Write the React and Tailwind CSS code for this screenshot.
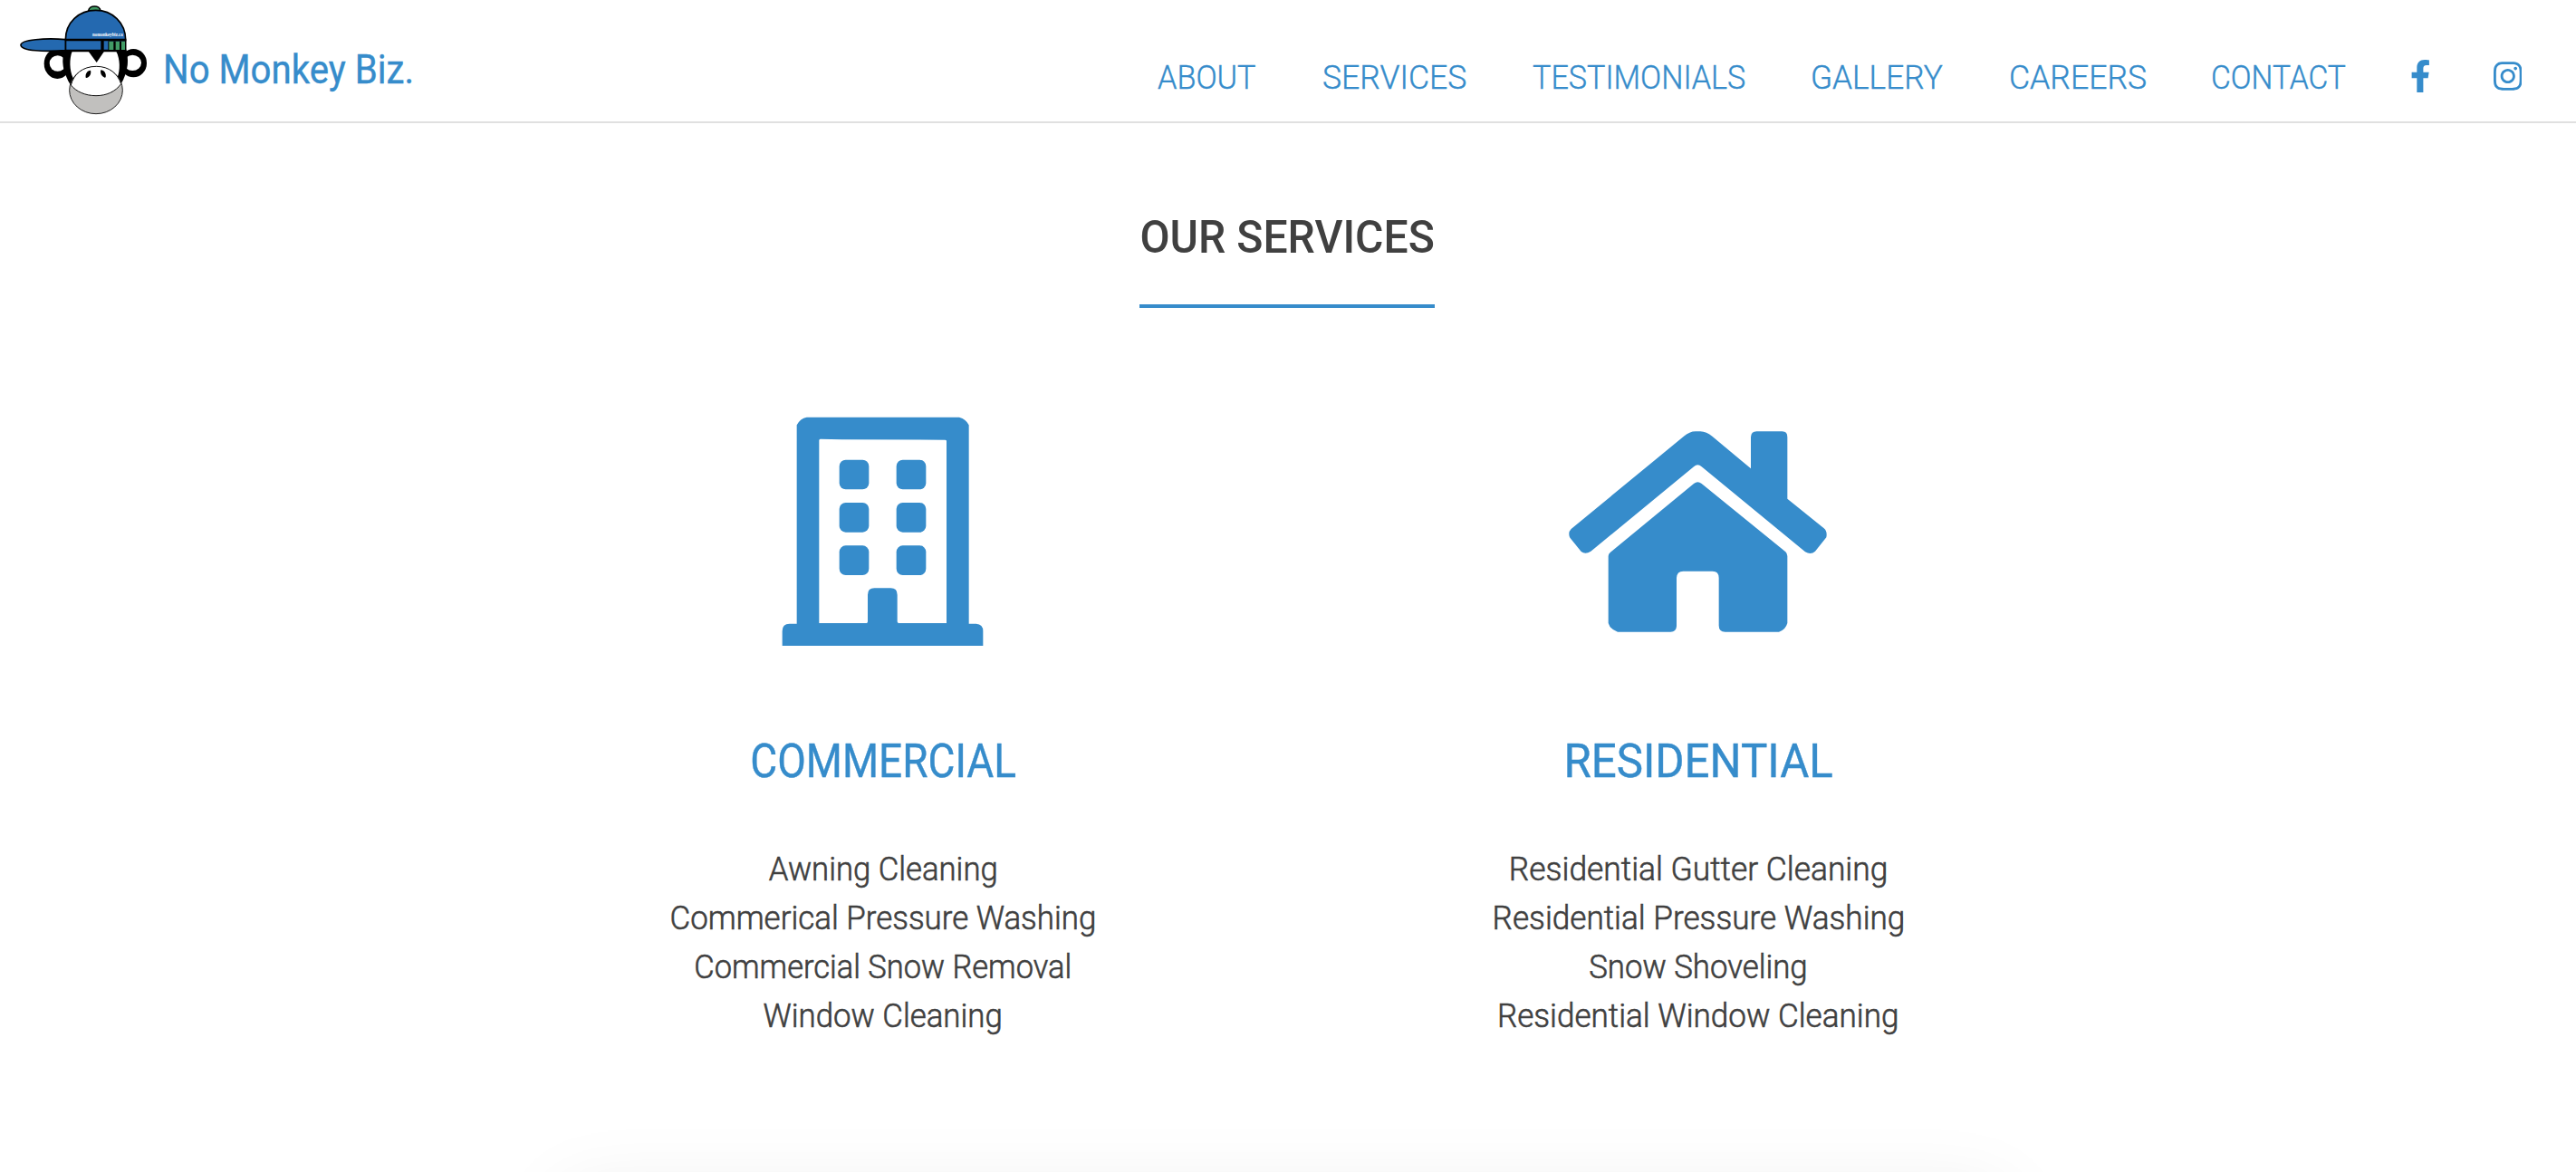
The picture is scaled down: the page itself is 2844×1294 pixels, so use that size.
import React from 'react';
import { FaFacebookF, FaInstagram } from 'react-icons/fa';

const navItems = [
  { label: 'ABOUT', box: 'w-[110px]', fit: 'scale-x-[0.951]' },
  { label: 'SERVICES', box: 'w-[160px]', fit: 'scale-x-[0.987]' },
  { label: 'TESTIMONIALS', box: 'w-[235px]', fit: 'scale-x-[0.948]' },
  { label: 'GALLERY', box: 'w-[147px]', fit: 'scale-x-[0.977]' },
  { label: 'CAREERS', box: 'w-[151px]', fit: 'scale-x-[0.988]' },
  { label: 'CONTACT', box: 'w-[150px]', fit: 'scale-x-[0.933]' },
];

const services = [
  {
    title: 'COMMERCIAL',
    fit: 'scale-x-[0.884]',
    Icon: BuildingIcon,
    items: [
      ['Awning Cleaning', 'scale-x-[0.963]'],
      ['Commerical Pressure Washing', 'scale-x-[0.969]'],
      ['Commercial Snow Removal', 'scale-x-[0.957]'],
      ['Window Cleaning', 'scale-x-[0.967]'],
    ],
  },
  {
    title: 'RESIDENTIAL',
    fit: 'scale-x-[0.946]',
    Icon: HouseIcon,
    items: [
      ['Residential Gutter Cleaning', 'scale-x-[0.982]'],
      ['Residential Pressure Washing', 'scale-x-[0.976]'],
      ['Snow Shoveling', 'scale-x-[0.966]'],
      ['Residential Window Cleaning', 'scale-x-[0.974]'],
    ],
  },
];

function MonkeyLogo() {
  return (
    <svg viewBox="0 0 480 390" className="h-[130px] w-[160px] shrink-0">
      {/* ears */}
      <ellipse cx="160" cy="211" rx="44" ry="50" />
      <ellipse cx="412" cy="209" rx="44" ry="47" />
      <ellipse cx="161" cy="210" rx="27" ry="26" fill="#fff" />
      <ellipse cx="409" cy="208" rx="29" ry="26" fill="#fff" />
      {/* head */}
      <path d="M186 160H386C398 195 396 235 370 280L288 300L205 284C178 240 170 200 186 160Z" />
      <path d="M209 170H263L290 207L315 170H355C368 195 369 232 358 258L288 290L212 258C200 232 199 195 209 170Z" fill="#fff" />
      {/* chin and muzzle */}
      <ellipse cx="288" cy="299" rx="88" ry="78" fill="#c1c0be" stroke="#222" strokeWidth="3" />
      <path d="M205 282C214 246 243 220 289 220C332 220 360 244 371 278C352 304 322 317 288 317C252 317 222 303 205 282Z" fill="#fff" stroke="#111" strokeWidth="3" />
      <path d="M254 257C252 245 258 234 270 233C273 243 268 254 257 258Z" />
      <path d="M320 256C322 244 316 233 304 232C301 242 306 253 317 257Z" />
      {/* cap */}
      <path d="M263 36C265 16 301 16 303 36Z" fill="#3f9a62" stroke="#000" strokeWidth="5" />
      <path d="M187 168V132C187 73 232 34 287 34C342 34 386 75 386 132V168Z" fill="#2469b0" stroke="#000" strokeWidth="5" />
      <path d="M187 131C120 125 40 132 39 149C40 169 120 172 187 167Z" fill="#2469b0" stroke="#000" strokeWidth="5" />
      <path d="M185 132H388M185 168H388" stroke="#000" strokeWidth="7" />
      <path d="M309 132V168" stroke="#000" strokeWidth="10" />
      <path d="M328 136H386V165H328Z" />
      <path d="M331 137H346V165H331ZM353 137H366V165H353ZM372 137H384V165H372Z" fill="#429c66" />
      <text x="276" y="121" textLength="101" lengthAdjust="spacingAndGlyphs" fontSize="16" fontWeight="700" fill="#fff" fontFamily="Liberation Serif, serif">
        nomonkeybiz.ca
      </text>
    </svg>
  );
}

function BuildingIcon() {
  return (
    <svg viewBox="0 0 810 870" className="h-[290px] w-[270px]" fill="#368ccb">
      <path
        fillRule="evenodd"
        d="M71 819V770Q71 746 95 746H119V88Q130 66 152 62H657Q680 68 689 88V746H713Q736 748 736 770V819ZM193 744H350Q354 744 354 739V650Q354 628 376 628H430Q452 628 452 650V739Q452 744 457 744H615V141Q615 137 610 137L268 136L197 134Q193 134 193 139Z"
      />
      {[203, 345, 487].map((y) => (
        <g key={y}>
          <rect x="260" y={y} width="98" height="98" rx="21" />
          <rect x="449" y={y} width="98" height="98" rx="21" />
        </g>
      ))}
    </svg>
  );
}

function HouseIcon() {
  return (
    <svg viewBox="0 -30 990 870" className="h-[290px] w-[330px]" fill="#368ccb">
      <path d="M74 402L446 96Q466 79 486 79H502Q522 80 542 96L669 202V98Q670 79 688 79H773Q790 79 790 98V302L911 400Q923 410 919 430L882 476Q868 489 849 478L506 196Q493 184 480 196L139 476Q121 488 107 477L70 431Q62 414 74 402Z" />
      <path d="M204 479L480 252Q493 242 506 252L784 478Q790 484 790 492V714Q784 736 762 743H584Q563 742 563 722V564Q563 542 542 542H445Q424 542 423 564V724Q422 743 403 743H228Q203 735 197 714V492Q197 484 204 479Z" />
    </svg>
  );
}

function Header() {
  return (
    <header className="flex h-[136px] items-start justify-between border-b-2 border-[#e0e0e0] pl-[10px] pr-[60px] text-[#368ccb]">
      <a className="flex">
        <MonkeyLogo />
        <span className="ml-[10px] mt-[44px] inline-block origin-left scale-x-[0.913] whitespace-nowrap text-[44px] leading-[66px] [-webkit-text-stroke:0.4px]">
          No Monkey Biz.
        </span>
      </a>
      <nav className="flex pt-[59px] text-4xl font-light leading-[54px]">
        <ul className="flex gap-[72px]">
          {navItems.map(({ label, box, fit }) => (
            <li key={label} className={box}>
              <a className={`inline-block origin-left whitespace-nowrap [-webkit-text-stroke:0.4px] ${fit}`}>{label}</a>
            </li>
          ))}
        </ul>
        <FaFacebookF className="ml-[70px] mt-[7px] h-9 w-[22.5px]" />
        <FaInstagram className="ml-[69px] mt-[7px] h-9 w-[31.5px]" />
      </nav>
    </header>
  );
}

export default function App() {
  return (
    <div className="h-[1294px] overflow-hidden bg-white font-[Roboto,sans-serif] text-[#404040]">
      <Header />
      <main>
        <h2 className="ml-[1258px] mt-[89px] flex h-[115px] w-[326px] justify-center border-b-4 border-[#368ccb] text-[50px] font-medium leading-[75px]">
          <span className="inline-block origin-center scale-x-[0.962] whitespace-nowrap">OUR SERVICES</span>
        </h2>
        <section className="ml-[525px] mt-[100px] grid w-[1800px] grid-cols-2">
          {services.map(({ title, fit, Icon, items }) => (
            <article key={title} className="flex flex-col items-center">
              <Icon />
              <h3 className={`mt-[72px] text-[52px] leading-[78px] text-[#368ccb] [-webkit-text-stroke:0.4px] ${fit}`}>{title}</h3>
              <ul className="mt-[53px] flex flex-col items-center text-4xl font-light leading-[54px]">
                {items.map(([text, itemFit]) => (
                  <li key={text} className={`whitespace-nowrap [-webkit-text-stroke:0.6px] ${itemFit}`}>{text}</li>
                ))}
              </ul>
            </article>
          ))}
        </section>
        <section className="ml-[622px] mt-[167px] h-[600px] w-[1590px] bg-white shadow-[0_0_80px_rgba(0,0,0,0.08)]" />
      </main>
    </div>
  );
}
